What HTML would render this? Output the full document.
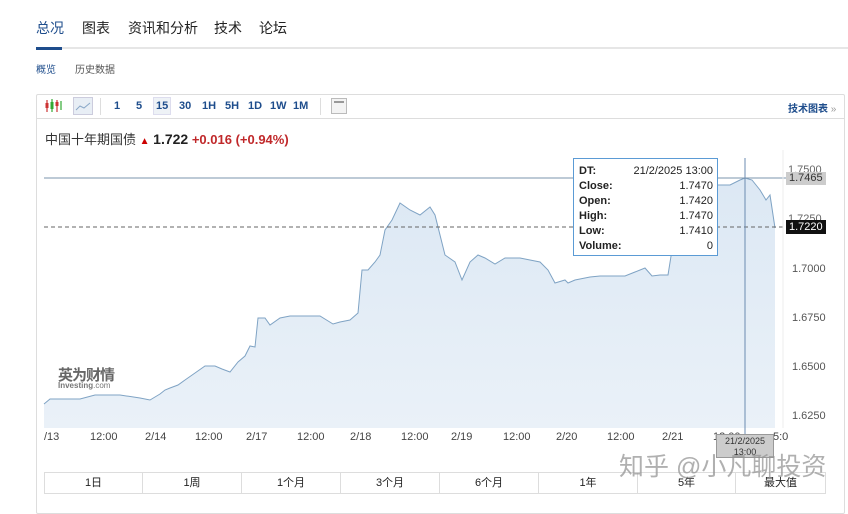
<!DOCTYPE html>
<html><head><meta charset="utf-8"><style>
*{margin:0;padding:0;box-sizing:border-box}
body{width:848px;height:500px;background:#fff;font-family:"Liberation Sans","Noto Sans CJK SC",sans-serif;position:relative;overflow:hidden;color:#222}
.a{position:absolute;white-space:nowrap}
.tab{font-size:14px;top:18px;color:#222}
.tb{font-size:11px;font-weight:bold;color:#1e4d8c;top:100px}
.xl{font-size:11px;color:#444;top:431px}
.rc{position:absolute;top:472px;height:22px;border-right:1px solid #ddd;font-size:11px;text-align:center;line-height:22px;color:#222}
</style></head><body>
<div class="a tab" style="left:36px;color:#1e4d8c">总况</div>
<div class="a tab" style="left:82px">图表</div>
<div class="a tab" style="left:128px">资讯和分析</div>
<div class="a tab" style="left:214px">技术</div>
<div class="a tab" style="left:259px">论坛</div>
<div class="a" style="left:36px;top:47px;width:812px;height:2px;background:#e6e6e6"></div>
<div class="a" style="left:36px;top:47px;width:26px;height:3px;background:#1e4d8c"></div>
<div class="a" style="left:36px;top:61px;font-size:10px;color:#1e4d8c">概览</div>
<div class="a" style="left:75px;top:61px;font-size:10px;color:#555">历史数据</div>
<div class="a" style="left:36px;top:94px;width:809px;height:420px;border:1px solid #ddd;border-radius:2px"></div>
<div class="a" style="left:37px;top:118px;width:807px;height:1px;background:#ddd"></div>
<svg class="a" style="left:44px;top:98px" width="20" height="16"><g stroke-width="1.2"><line x1="3" y1="2" x2="3" y2="14" stroke="#c33"/><rect x="1.5" y="5" width="3" height="5" fill="#c33"/><line x1="8" y1="1" x2="8" y2="14" stroke="#3a3"/><rect x="6.5" y="4" width="3" height="7" fill="#3a3"/><line x1="13" y1="2" x2="13" y2="14" stroke="#c33"/><rect x="11.5" y="4" width="3" height="4" fill="#c33"/><line x1="17" y1="3" x2="17" y2="12" stroke="#3a3"/></g></svg>
<div class="a" style="left:73px;top:97px;width:20px;height:18px;background:#e8eef5;border:1px solid #ccd"></div>
<svg class="a" style="left:75px;top:100px" width="16" height="12"><path d="M1 10 L5 6 L9 8 L15 3" stroke="#8aa8c8" fill="none"/></svg>
<div class="a" style="left:100px;top:98px;width:1px;height:17px;background:#ddd"></div>
<div class="a" style="left:153px;top:97px;width:18px;height:18px;background:#eef2f6;border:1px solid #dde"></div>
<div class="a tb" style="left:114px">1</div>
<div class="a tb" style="left:136px">5</div>
<div class="a tb" style="left:156px">15</div>
<div class="a tb" style="left:179px">30</div>
<div class="a tb" style="left:202px">1H</div>
<div class="a tb" style="left:225px">5H</div>
<div class="a tb" style="left:248px">1D</div>
<div class="a tb" style="left:270px">1W</div>
<div class="a tb" style="left:293px">1M</div>
<div class="a" style="left:320px;top:98px;width:1px;height:17px;background:#ddd"></div>
<div class="a" style="left:331px;top:98px;width:16px;height:16px;border:1px solid #bbb;background:#f3f3f3"></div>
<div class="a" style="left:334px;top:101px;width:10px;height:2px;background:#999"></div>
<div class="a" style="left:788px;top:100px;font-size:10px;font-weight:bold;color:#1e4d8c">技术图表 <span style="color:#999;font-weight:normal">»</span></div>
<div class="a" style="left:45px;top:129px;font-size:13px;color:#333">中国十年期国债 <span style="color:#c00;font-size:10px">▲</span> <b style="color:#222;font-size:14px">1.722</b> <span style="color:#c0282a;font-weight:bold">+0.016 (+0.94%)</span></div>
<svg class="a" style="left:0;top:0" width="848" height="500">
<defs><linearGradient id="g" x1="0" y1="0" x2="0" y2="1"><stop offset="0" stop-color="#dce8f4"/><stop offset="1" stop-color="#eaf1f8"/></linearGradient></defs>
<path d="M44,404 L50,399 L80,399 L95,395 L120,395 L140,398 L150,400 L155,397 L160,394 L165,390 L170,388 L178,385 L185,380 L195,373 L205,366 L215,366 L222,369 L230,372 L238,362 L245,356 L250,346 L255,347 L258,318 L265,318 L270,325 L280,318 L290,316 L320,316 L333,324 L340,322 L350,320 L358,313 L362,270 L368,270 L375,262 L380,255 L385,230 L392,220 L400,203 L410,210 L420,215 L430,207 L435,215 L445,255 L455,262 L462,280 L470,262 L478,255 L485,258 L495,264 L505,258 L520,258 L530,260 L540,262 L548,270 L555,283 L565,280 L568,283 L575,280 L590,277 L600,276 L625,276 L635,272 L645,268 L652,276 L660,275 L668,275 L672,250 L690,185 L730,185 L740,180 L745,178 L752,180 L760,190 L766,200 L770,195 L775,228 L775,428 L44,428 Z" fill="url(#g)" stroke="none"/>
<path d="M44,404 L50,399 L80,399 L95,395 L120,395 L140,398 L150,400 L155,397 L160,394 L165,390 L170,388 L178,385 L185,380 L195,373 L205,366 L215,366 L222,369 L230,372 L238,362 L245,356 L250,346 L255,347 L258,318 L265,318 L270,325 L280,318 L290,316 L320,316 L333,324 L340,322 L350,320 L358,313 L362,270 L368,270 L375,262 L380,255 L385,230 L392,220 L400,203 L410,210 L420,215 L430,207 L435,215 L445,255 L455,262 L462,280 L470,262 L478,255 L485,258 L495,264 L505,258 L520,258 L530,260 L540,262 L548,270 L555,283 L565,280 L568,283 L575,280 L590,277 L600,276 L625,276 L635,272 L645,268 L652,276 L660,275 L668,275 L672,250 L690,185 L730,185 L740,180 L745,178 L752,180 L760,190 L766,200 L770,195 L775,228" fill="none" stroke="#7fa3c4" stroke-width="1"/>
<line x1="44" y1="178" x2="787" y2="178" stroke="#7b95ad" stroke-width="1"/>
<line x1="44" y1="227" x2="787" y2="227" stroke="#666" stroke-dasharray="4,3"/>
<line x1="745" y1="158" x2="745" y2="458" stroke="#6b8bb0"/>
<line x1="783" y1="150" x2="783" y2="428" stroke="#eee"/>
</svg>
<div class="a" style="left:788px;top:164px;font-size:11px;color:#666">1.7500</div>
<div class="a" style="left:788px;top:213px;font-size:11px;color:#666">1.7250</div>
<div class="a" style="left:792px;top:263px;font-size:11px;color:#555">1.7000</div>
<div class="a" style="left:792px;top:312px;font-size:11px;color:#555">1.6750</div>
<div class="a" style="left:792px;top:361px;font-size:11px;color:#555">1.6500</div>
<div class="a" style="left:792px;top:410px;font-size:11px;color:#555">1.6250</div>
<div class="a" style="left:786px;top:172px;width:40px;height:13px;background:#ccc;font-size:11px;color:#333;padding-left:3px;line-height:13px">1.7465</div>
<div class="a" style="left:786px;top:220px;width:40px;height:14px;background:#111;font-size:11px;color:#fff;padding-left:3px;line-height:14px">1.7220</div>
<div class="a" style="left:573px;top:158px;width:145px;height:98px;background:#fff;border:1.5px solid #5b9bd5;font-size:11px;line-height:15px;padding:5px 4px 0 5px">
<div style="display:flex;justify-content:space-between"><b>DT:</b><span>21/2/2025 13:00</span></div>
<div style="display:flex;justify-content:space-between"><b>Close:</b><span>1.7470</span></div>
<div style="display:flex;justify-content:space-between"><b>Open:</b><span>1.7420</span></div>
<div style="display:flex;justify-content:space-between"><b>High:</b><span>1.7470</span></div>
<div style="display:flex;justify-content:space-between"><b>Low:</b><span>1.7410</span></div>
<div style="display:flex;justify-content:space-between"><b>Volume:</b><span>0</span></div>
</div>
<div class="a" style="left:58px;top:364px;font-size:15px;font-weight:bold;color:#666;letter-spacing:-1px">英为财情</div>
<div class="a" style="left:58px;top:381px;font-size:8px;font-weight:bold;color:#777">Investing<span style="font-weight:normal">.com</span></div>
<div class="a xl" style="left:44px">/13</div>
<div class="a xl" style="left:90px">12:00</div>
<div class="a xl" style="left:145px">2/14</div>
<div class="a xl" style="left:195px">12:00</div>
<div class="a xl" style="left:246px">2/17</div>
<div class="a xl" style="left:297px">12:00</div>
<div class="a xl" style="left:350px">2/18</div>
<div class="a xl" style="left:401px">12:00</div>
<div class="a xl" style="left:451px">2/19</div>
<div class="a xl" style="left:503px">12:00</div>
<div class="a xl" style="left:556px">2/20</div>
<div class="a xl" style="left:607px">12:00</div>
<div class="a xl" style="left:662px">2/21</div>
<div class="a xl" style="left:713px">12:00</div>
<div class="a xl" style="left:773px">5:0</div>
<div class="a" style="left:716px;top:434px;width:58px;height:24px;background:#ccc;border:1px solid #999;font-size:9px;text-align:center;line-height:11px;color:#333;padding-top:1px">21/2/2025<br>13:00</div>
<div class="a" style="left:44px;top:472px;width:782px;height:22px;border:1px solid #ddd"></div>
<div class="rc" style="left:45px;width:98px">1日</div>
<div class="rc" style="left:143px;width:99px">1周</div>
<div class="rc" style="left:242px;width:99px">1个月</div>
<div class="rc" style="left:341px;width:99px">3个月</div>
<div class="rc" style="left:440px;width:99px">6个月</div>
<div class="rc" style="left:539px;width:99px">1年</div>
<div class="rc" style="left:638px;width:98px">5年</div>
<div class="rc" style="left:736px;width:89px;border:none">最大值</div>
<div class="a" style="left:619px;top:447px;font-size:25px;color:rgba(150,150,150,0.75)">知乎 @小凡聊投资</div>
</body></html>
